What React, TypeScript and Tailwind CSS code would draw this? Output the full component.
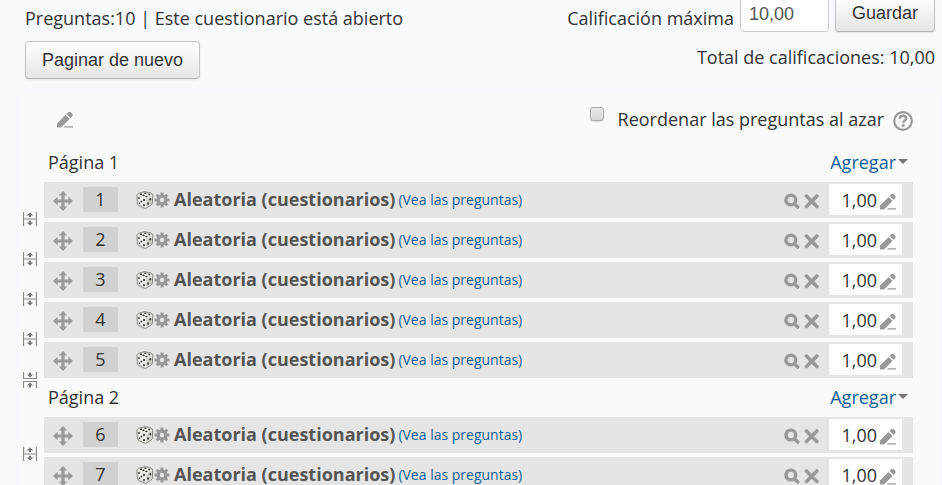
import type { ReactNode } from "react";

const OPEN = "font-['Open_Sans','Noto_Sans',sans-serif]";
const BUTTON =
  "h-[38px] rounded-[4px] border border-[#c5c5c5] border-b-[#b3b3b3] bg-linear-to-b from-white to-[#e6e6e6] px-4 font-['Liberation_Sans',Arial,sans-serif] text-[18px] leading-5 text-[#333] shadow-[0_1px_2px_rgba(0,0,0,0.08)] [text-shadow:0_1px_1px_rgba(255,255,255,0.75)]";

function Pencil() {
  return (
    <svg viewBox="0 0 16 16" className="size-4 fill-[#999]" aria-hidden="true">
      <path d="M0 15.500v-4L8.600 2.900l4 4L4 15.500zM9.600 1.900l1-1a2.600 2.600 0 1 1 4 4l-1 1zM6.500 15.500L8 14.200h8v1.300z" />
    </svg>
  );
}

function Move() {
  return (
    <svg viewBox="0 0 20 20" className="size-5 fill-[#999]" aria-hidden="true">
      <path d="M10 0l4.2 4.6h-2.6v3.8h3.8V5.8L20 10l-4.6 4.2v-2.6h-3.8v3.8h2.6L10 20l-4.2-4.6h2.6v-3.8H4.6v2.6L0 10l4.6-4.2v2.6h3.8V4.6H5.8z" />
    </svg>
  );
}

function Dice() {
  return (
    <svg viewBox="0 0 18 18" className="size-[18px]" aria-hidden="true">
      <path d="M9 .6L15 2.200q1.800.6 1.800 2L16.300 12q-.1 1.300-1.300 2L10.500 17q-1 .6-2.200.1L3 14.600q-1.500-.8-1.600-2.200L1 4.600q0-1.600 1.600-2.200z" fill="#e4e5de" stroke="#85877f" />
      <path d="M10.500 8l5.500-3-.6 7.300-4.900 3.700z" fill="#cfd0c8" />
      <path d="M2.200 4.600L10 7.200l5.800-3L9 1.600z" fill="#f4f4ee" />
      <path d="M2.200 6L9.600 8.400v7.400L3 12.800z" fill="#f8f8f4" />
      <g fill="#2d2f29">
        <ellipse cx="5" cy="3.400" rx="1.200" ry=".8" />
        <ellipse cx="9.300" cy="2.300" rx="1.200" ry=".7" />
        <ellipse cx="13.200" cy="3.600" rx="1.200" ry=".8" />
        <ellipse cx="7.500" cy="4.400" rx="1.100" ry=".8" />
        <ellipse cx="10.400" cy="5.500" rx="1.200" ry=".8" />
        <ellipse cx="3" cy="7" rx=".9" ry="1.100" />
        <ellipse cx="8" cy="9" rx=".9" ry="1.200" />
        <ellipse cx="5.500" cy="10.600" rx=".9" ry="1.100" />
        <ellipse cx="3.500" cy="12.300" rx=".8" ry="1" />
        <ellipse cx="8" cy="14" rx=".9" ry="1.200" />
        <ellipse cx="14.300" cy="8.300" rx=".8" ry="1.300" />
        <ellipse cx="12" cy="12.600" rx=".8" ry="1.300" />
      </g>
    </svg>
  );
}

function Gear() {
  return (
    <svg viewBox="0 0 16 16" className="size-4" aria-hidden="true">
      <g fill="none" stroke="#999" strokeWidth="3">
        <path d="M8 .5v3M8 12.500v3M.5 8h3M12.500 8h3M2.700 2.700l2.100 2.100M11.200 11.200l2.100 2.100M13.300 2.700l-2.100 2.100M4.800 11.200l-2.100 2.100" />
        <circle cx="8" cy="8" r="3.900" strokeWidth="3.400" />
      </g>
    </svg>
  );
}

function Magnifier() {
  return (
    <svg viewBox="0 0 16 16" className="size-4" fill="none" stroke="#999" aria-hidden="true">
      <circle cx="6.800" cy="7" r="4.900" strokeWidth="3.400" />
      <path d="M10.500 10.800l3.300 3.300" strokeWidth="3.400" strokeLinecap="round" />
    </svg>
  );
}

function Cross() {
  return (
    <svg viewBox="0 0 16 16" className="size-4" fill="none" stroke="#999" aria-hidden="true">
      <path d="M2.500 3l10.400 10.400M12.900 3L2.500 13.400" strokeWidth="3.600" strokeLinecap="round" />
    </svg>
  );
}

function SplitIcon() {
  return (
    <svg viewBox="0 0 14 14" className="size-3.5" aria-hidden="true">
      <path d="M.5 0v14M13.500 0v14M1 7h12" stroke="#888" strokeWidth="1.200" fill="none" />
      <path d="M7 .5l3.400 3H8v1.700H6V3.500H3.600zM7 13.500l3.400-3H8V8.800H6v1.700H3.600z" fill="#777" />
    </svg>
  );
}

function JoinIcon() {
  return (
    <svg viewBox="0 0 14 16" className="h-4 w-3.5" aria-hidden="true">
      <path d="M.5 0v6.500h13V0M.5 16V9.500h13V16" stroke="#888" strokeWidth="1.200" fill="none" />
      <path d="M7 5.400l3.200-2.800H8V.6H6v2H3.800zM7 10.600l3.200 2.800H8v2H6v-2H3.800z" fill="#777" />
    </svg>
  );
}

function IconButton({ label, children }: { label: string; children: ReactNode }) {
  return (
    <button type="button" aria-label={label} className="block shrink-0">
      {children}
    </button>
  );
}

function Question({ number, last }: { number: number; last: boolean }) {
  return (
    <li className={`flex ${last ? "" : "pb-1"}`}>
      <div className={`flex w-[25px] items-end pl-1 ${last ? "-mb-2.5" : "-mb-2"}`}>
        {last ? (
          <IconButton label="Quitar salto de página">
            <JoinIcon />
          </IconButton>
        ) : (
          <IconButton label="Añadir salto de página">
            <SplitIcon />
          </IconButton>
        )}
      </div>
      <div className="flex h-9 min-w-0 flex-1 items-center bg-[#e5e5e5] pr-[11px] pb-px pl-[9px]">
        <div className="pt-0.5">
          <IconButton label="Mover">
            <Move />
          </IconButton>
        </div>
        <span className="ml-2.5 h-[25px] w-[35px] bg-[#d1d1d1] text-center">{number}</span>
        <span className="ml-[18px] flex items-center">
          <Dice />
          <IconButton label="Editar pregunta">
            <Gear />
          </IconButton>
        </span>
        <span className="ml-1 pb-0.5 font-bold whitespace-nowrap text-[#555]">Aleatoria (cuestionarios)</span>
        <a href="#preguntas" className="ml-[3px] text-[14px] whitespace-nowrap text-[#0f5f9c]">
          (Vea las preguntas)
        </a>
        <span className="ml-auto flex gap-1 pt-0.5">
          <IconButton label="Vista previa">
            <Magnifier />
          </IconButton>
          <IconButton label="Eliminar">
            <Cross />
          </IconButton>
        </span>
        <span className="ml-[9px] flex h-[31px] w-[73px] items-center justify-end gap-[3px] bg-white pr-1.5">
          1,00
          <span className="pt-1">
            <IconButton label="Editar calificación">
              <Pencil />
            </IconButton>
          </span>
        </span>
      </div>
    </li>
  );
}

function Page({ title, numbers, joined }: { title: string; numbers: number[]; joined: boolean }) {
  return (
    <section>
      <div className="flex h-[39px] items-center justify-between pr-[5px] pb-0.5 pl-[29px]">
        <h2>{title}</h2>
        <button type="button" className="flex items-center gap-0.5 text-[#0f5f9c]">
          Agregar
          <svg viewBox="0 0 10 5" className="h-[5px] w-2.5 fill-[#777]" aria-hidden="true">
            <path d="M0 0h10L5 5z" />
          </svg>
        </button>
      </div>
      <ul>
        {numbers.map((n, i) => (
          <Question key={n} number={n} last={joined && i === numbers.length - 1} />
        ))}
      </ul>
    </section>
  );
}

export default function App() {
  return (
    <main className={`h-screen overflow-hidden bg-[#f8f9fc] text-[18px] leading-6 text-[#333] ${OPEN}`}>
      <header className="-mt-1.5 pr-[7px] pl-[25px]">
        <div className="flex items-center justify-between">
          <p className="pt-2.5">Preguntas:10 | Este cuestionario está abierto</p>
          <form className="flex items-center">
            <label htmlFor="maxgrade" className="pt-2.5">
              Calificación máxima
            </label>
            <input
              id="maxgrade"
              defaultValue="10,00"
              className="ml-1.5 h-[38px] w-[89px] rounded-[4px] border border-[#ccc] bg-white px-2 pt-0.5 font-['Liberation_Sans',Arial,sans-serif] text-[18px] text-[#555]"
            />
            <button type="button" className={`ml-1.5 ${BUTTON}`}>
              Guardar
            </button>
          </form>
        </div>
        <div className="mt-[9px] flex items-center justify-between">
          <button type="button" className={BUTTON}>
            Paginar de nuevo
          </button>
          <p className="pb-1.5">Total de calificaciones: 10,00</p>
        </div>
      </header>
      <div className="mt-3 mr-1 ml-[19px] bg-[#fafafa] pr-[25px]">
        <div className="flex h-13 items-center justify-between pt-1 pl-[38px]">
          <div className="pt-0.5">
            <IconButton label="Editar sección">
              <Pencil />
            </IconButton>
          </div>
          <div className="flex items-center">
            <input
              id="shuffle"
              type="checkbox"
              className="mb-2.5 size-3.5 appearance-none rounded-[3px] border border-[#aaa] bg-linear-to-b from-[#e8e8e8] to-[#d8d8d8] shadow-[0_1px_1px_rgba(0,0,0,0.12)]"
            />
            <label htmlFor="shuffle" className="ml-3.5">
              Reordenar las preguntas al azar
            </label>
            <button type="button" aria-label="Ayuda" className="ml-[9px] block pt-1">
              <svg viewBox="0 0 20 20" className="size-5" fill="none" stroke="#999" aria-hidden="true">
                <circle cx="10" cy="10" r="8.800" strokeWidth="2.200" />
                <path d="M6.800 7.700c.1-2 1.500-3 3.200-3s3.200 1 3.200 2.700c0 2.200-2.900 2.300-2.900 4.300" strokeWidth="2.400" />
                <circle cx="10.200" cy="14.600" r="1.500" fill="#999" stroke="none" />
              </svg>
            </button>
          </div>
        </div>
        <Page title="Página 1" numbers={[1, 2, 3, 4, 5]} joined />
        <Page title="Página 2" numbers={[6, 7]} joined={false} />
      </div>
    </main>
  );
}
